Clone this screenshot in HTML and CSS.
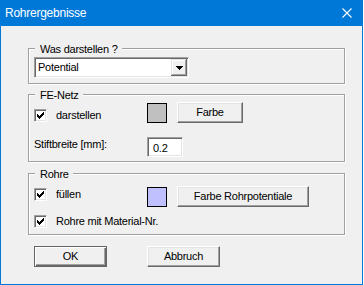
FILE: index.html
```html
<!DOCTYPE html>
<html lang="de">
<head>
  <meta charset="UTF-8" />
  <title>Rohrergebnisse</title>
  <link rel="stylesheet" href="styles.css">
</head>
<body>
  <div class="dialog">
    <div class="titlebar">
      <span class="title">Rohrergebnisse</span>
      <svg class="close" width="10" height="10" viewBox="0 0 10 10"><path d="M0.5 0.5 L9.5 9.5 M9.5 0.5 L0.5 9.5" stroke="#fff" stroke-width="1.1" fill="none"/></svg>
    </div>

    <div class="dialog-body">
      <!-- Was darstellen -->
      <fieldset class="group group-what">
        <legend>Was darstellen ?</legend>
        <div class="combo">
          <span class="combo-value">Potential</span>
          <span class="combo-btn"><svg width="7" height="4" viewBox="0 0 7 4"><path d="M0 0h7v1h-1v1h-1v1h-1v1h-1v-1h-1v-1h-1v-1h-1z" fill="#000"/></svg></span>
        </div>
      </fieldset>

      <!-- FE-Netz -->
      <fieldset class="group group-net">
        <legend>FE-Netz</legend>
        <div class="row">
          <label class="check">
            <span class="box"><svg width="11" height="11" viewBox="0 0 11 11" shape-rendering="crispEdges"><path d="M8 2h1v1h-1zM7 3h2v1h-2zM2 4h1v1h-1zM6 4h3v1h-3zM2 5h2v1h-2zM5 5h3v1h-3zM2 6h5v1h-5zM3 7h3v1h-3zM4 8h1v1h-1z" fill="#000"/></svg></span>
            darstellen
          </label>
          <span class="swatch swatch-gray"></span>
          <button class="btn btn-color">Farbe</button>
        </div>
        <div class="row row-pen">
          <span class="field-label">Stiftbreite [mm]:</span>
          <span class="field">0.2</span>
        </div>
      </fieldset>

      <!-- Rohre -->
      <fieldset class="group group-pipe">
        <legend>Rohre</legend>
        <div class="row row-fill">
          <label class="check">
            <span class="box"><svg width="11" height="11" viewBox="0 0 11 11" shape-rendering="crispEdges"><path d="M8 2h1v1h-1zM7 3h2v1h-2zM2 4h1v1h-1zM6 4h3v1h-3zM2 5h2v1h-2zM5 5h3v1h-3zM2 6h5v1h-5zM3 7h3v1h-3zM4 8h1v1h-1z" fill="#000"/></svg></span>
            füllen
          </label>
          <span class="swatch swatch-blue"></span>
          <button class="btn btn-wide">Farbe Rohrpotentiale</button>
        </div>
        <label class="check check-material">
          <span class="box"><svg width="11" height="11" viewBox="0 0 11 11" shape-rendering="crispEdges"><path d="M8 2h1v1h-1zM7 3h2v1h-2zM2 4h1v1h-1zM6 4h3v1h-3zM2 5h2v1h-2zM5 5h3v1h-3zM2 6h5v1h-5zM3 7h3v1h-3zM4 8h1v1h-1z" fill="#000"/></svg></span>
          Rohre mit Material-Nr.
        </label>
      </fieldset>

      <div class="actions">
        <button class="btn btn-default">OK</button>
        <button class="btn">Abbruch</button>
      </div>
    </div>
  </div>
</body>
</html>
```

FILE: styles.css
```css
* { margin: 0; padding: 0; box-sizing: border-box; }
body {
  background: #fff;
  font-family: "Liberation Sans", Arial, sans-serif;
  font-size: 11px;
  letter-spacing: -0.25px;
  color: #000;
}
.dialog {
  width: 363px;
  height: 285px;
  background: #f0f0f0;
  border: 1px solid #0078d7;
  border-top: 0;
}
.titlebar {
  height: 26px;
  background: #0078d7;
  color: #fff;
  display: flex;
  align-items: center;
  justify-content: space-between;
  padding: 0 10px 0 4px;
}
.title { font-size: 12px; line-height: 26px; }
.close { display: block; }

.dialog-body { padding: 15px 0 0 27px; }

/* group boxes */
.group {
  width: 317px;
  min-inline-size: 0;
  border: 1px solid #a0a0a0;
  box-shadow: inset 1px 1px #fff, 1px 1px #fff;
  padding: 0 5px;
}
.group legend {
  margin-left: 1px;
  padding: 2px 4px 0 5px;
  line-height: 13px;
  background: #f0f0f0;
}
.group-what { padding-bottom: 5px; }
.group-net { margin-top: 3px; padding-bottom: 4px; }
.group-pipe { margin-top: 4px; padding-bottom: 6px; }

/* combo box */
.combo {
  margin-top: 1px;
  width: 155px;
  height: 21px;
  display: flex;
  align-items: center;
  justify-content: space-between;
  background: #fff;
  border: 1px solid;
  border-color: #a0a0a0 #fff #fff #a0a0a0;
  box-shadow: inset 1px 1px #696969, inset -1px -1px #e3e3e3;
  padding: 1px 1px 1px 3px;
  line-height: 13px;
}
.combo-btn {
  width: 16px;
  height: 17px;
  display: flex;
  align-items: center;
  justify-content: center;
  background: #f0f0f0;
  box-shadow: inset -1px -1px #696969, inset 1px 1px #e3e3e3, inset -2px -2px #a0a0a0, inset 2px 2px #fff;
}
.combo-btn svg { display: block; }

/* rows */
.row { display: flex; align-items: flex-start; }
.row-pen { margin-top: 14px; }
.row-fill { margin-top: 5px; }

.check {
  width: 113px;
  height: 13px;
  display: flex;
  align-items: center;
  gap: 9px;
  line-height: 13px;
  margin-top: 7px;
  white-space: nowrap;
}
.row-fill .check { margin-top: 2px; }
.check-material { width: auto; margin-top: 8px; }
.box {
  width: 13px;
  height: 13px;
  flex: none;
  background: #fff;
  border: 1px solid;
  border-color: #a0a0a0 #fff #fff #a0a0a0;
  box-shadow: inset 1px 1px #696969, inset -1px -1px #e3e3e3;
}
.box svg { display: block; }

.swatch {
  width: 20px;
  height: 20px;
  margin-top: 1px;
  border: 1px solid #000;
}
.swatch-gray { background: #c0c0c0; }
.swatch-blue { background: #c0c0ff; }

.field-label { width: 113px; margin-top: 1px; line-height: 13px; }
.field {
  display: block;
  width: 36px;
  height: 20px;
  background: #fff;
  border: 1px solid;
  border-color: #a0a0a0 #fff #fff #a0a0a0;
  box-shadow: inset 1px 1px #696969, inset -1px -1px #e3e3e3;
  padding: 4px 0 0 5px;
  line-height: 13px;
}

/* buttons */
.btn {
  height: 21px;
  width: 73px;
  font: inherit;
  letter-spacing: inherit;
  color: #000;
  background: #f0f0f0;
  border: 1px solid;
  border-color: #fff #696969 #696969 #fff;
  box-shadow: inset -1px -1px #a0a0a0, inset 1px 1px #e3e3e3;
  line-height: 13px;
}
.btn-color { width: 66px; margin-left: 10px; }
.btn-wide { width: 132px; margin-left: 10px; }
.btn-default {
  border-color: #646464;
  box-shadow: inset 1px 1px #fff, inset -1px -1px #696969, inset -2px -2px #a0a0a0;
}

.actions {
  display: flex;
  gap: 40px;
  margin-top: 11px;
  padding-left: 6px;
}
```
